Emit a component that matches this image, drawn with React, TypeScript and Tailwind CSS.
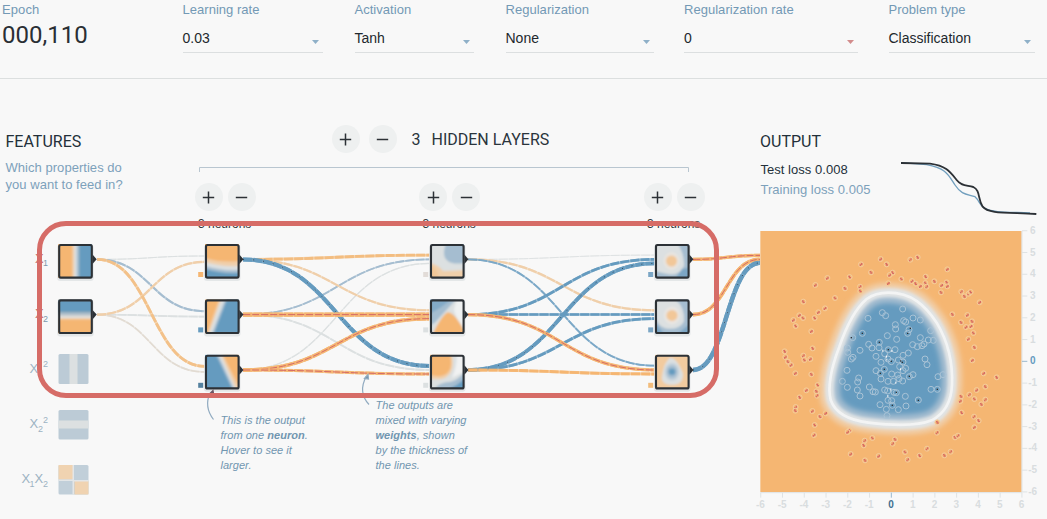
import React from "react";

const ORANGE = "#f5b672";
const PEACH = "#f0cfaa";
const BLUE = "#659bbf";
const SKY = "#a5bdd0";
const MIST = "#dce0e1";
const RED = "#d66c67";
const INK = "#2c3136";

function Field({ label, value, box, arrow = "#8fb0c8" }: { label: string; value: string; box: string; arrow?: string }) {
  return (
    <label className={`flex shrink-0 flex-col ${box}`}>
      <span className="h-[20px] whitespace-nowrap text-[13px] leading-[20px] tracking-[0.03px] text-[#7399b5]">{label}</span>
      <span className="flex h-[33px] items-center justify-between border-b border-[#dcdfe0] pr-[4px] pt-[4px]">
        <span className="text-[14px] leading-[20px] text-[#22282d]">{value}</span>
        <svg width="7" height="4" className="mt-[7px]">
          <path d="M0 0H7L3.5 4Z" fill={arrow} />
        </svg>
      </span>
    </label>
  );
}

function RoundButton({ kind }: { kind: "plus" | "minus" }) {
  return (
    <button className="flex size-[28px] items-center justify-center rounded-full bg-[#eef0f0]">
      <svg width="13" height="13" viewBox="0 0 13 13" stroke={INK} strokeWidth="1.5">
        <path d={kind === "plus" ? "M0.8 6.5H12.2M6.5 0.5V12.5" : "M0.8 6.5H12.2"} />
      </svg>
    </button>
  );
}

const rows = [259.4, 314.6, 370];
type Edge = { x1: number; y1: number; x2: number; y2: number; c: string; w: number; core?: string };
const link = (x1: number, a: number, x2: number, b: number, off: number, c: string, w: number, core?: string): Edge => ({
  x1, y1: rows[a], x2, y2: rows[b] + off, c, w, core,
});

const edges: Edge[] = [
  link(97, 0, 205, 0, -3.4, MIST, 1),
  link(97, 1, 205, 1, 2, MIST, 1.6),
  link(97, 1, 205, 2, 2, "#e2dbd2", 1.6),
  link(97, 0, 205, 1, -3.4, SKY, 2),
  link(97, 1, 205, 0, 2.5, PEACH, 2.2),
  link(97, 0, 205, 2, -3.6, "#f3c189", 2.8),
  link(243, 2, 430, 0, 4, MIST, 1.2),
  link(243, 1, 430, 2, 0, MIST, 1.8),
  link(243, 1, 430, 0, 0, SKY, 1.8),
  link(243, 0, 430, 1, -4.3, PEACH, 2.1),
  link(243, 0, 430, 0, -4.3, "#f3bd80", 2.8),
  link(243, 0, 430, 2, -4, BLUE, 4, "#334b5e"),
  link(243, 1, 430, 1, 0, ORANGE, 4.4, RED),
  link(243, 2, 430, 1, 4, ORANGE, 3.6, RED),
  link(243, 2, 430, 2, 4, ORANGE, 3, RED),
  link(468, 0, 655, 0, -4.3, MIST, 0.8),
  link(468, 0, 655, 1, -4.3, PEACH, 2.2),
  link(468, 0, 655, 2, -4.3, "#7ba8c7", 1.8),
  link(468, 1, 655, 0, 0, BLUE, 2.7),
  link(468, 1, 655, 1, 0, BLUE, 2.5),
  link(468, 2, 655, 0, 4, BLUE, 3.6, "#334b5e"),
  link(468, 2, 655, 1, 4, BLUE, 2.8),
  link(468, 2, 655, 2, 4, ORANGE, 2.8),
  link(468, 1, 655, 2, 0, ORANGE, 3.2, RED),
  link(693, 0, 760, 0, -4, ORANGE, 3.2, RED),
  link(693, 1, 760, 0, 0, ORANGE, 3.6, RED),
  link(693, 2, 760, 0, 3.5, BLUE, 4.4, "#334b5e"),
];

function EdgePath({ e }: { e: Edge }) {
  const m = (e.x1 + e.x2) / 2;
  const d = `M${e.x1} ${e.y1}C${m} ${e.y1} ${m} ${e.y2} ${e.x2} ${e.y2}`;
  return (
    <g fill="none">
      <path d={d} stroke={e.c} strokeWidth={e.w} opacity={e.w > 3 ? 0.85 : 0.65} />
      <path d={d} stroke={e.c} strokeWidth={e.w} strokeDasharray="9 1.2" />
      {e.core && <path d={d} stroke={e.core} strokeWidth={1} strokeDasharray={e.core === RED ? "7 2" : "1 9"} />}
    </g>
  );
}

const heat: Record<string, React.ReactNode> = {
  x1: <><rect width="34" height="34" fill={ORANGE} /><path d="M14 0h3v34h-3z" fill={PEACH} /><path d="M16 0h3v34h-3z" fill={MIST} /><path d="M18.500 0h3v34h-3z" fill={SKY} /><path d="M21 0h13v34H21z" fill={BLUE} /></>,
  x2: <><rect width="34" height="34" fill={ORANGE} /><path d="M0 0h34v13H0z" fill={BLUE} /><path d="M0 13h34v3H0z" fill={SKY} /><path d="M0 16h34v2.500H0z" fill={MIST} /><path d="M0 18.500h34v1.500H0z" fill={PEACH} /></>,
  a1: <><rect width="34" height="34" fill={ORANGE} /><path d="M0 14Q16 19 34 17V34H0Z" fill={PEACH} /><path d="M0 18Q16 23 34 22V34H0Z" fill={MIST} /><path d="M0 22Q16 27 34 26V34H0Z" fill={SKY} /><path d="M0 25Q16 30 34 29V34H0Z" fill={BLUE} /></>,
  a2: <><rect width="34" height="34" fill={ORANGE} /><path d="M14 0H34V34H2Z" fill={PEACH} /><path d="M16 0H34V34H4Z" fill={MIST} /><path d="M20 0H34V34H7Z" fill={SKY} /><path d="M22 0H34V34H9Z" fill={BLUE} /></>,
  a3: <><rect width="34" height="34" fill={BLUE} /><path d="M11 0H34V34H27Z" fill={SKY} /><path d="M13 0H34V34H29Z" fill={MIST} /><path d="M16 0H34V34H31Z" fill={PEACH} /><path d="M18 0H34V32Z" fill={ORANGE} /></>,
  b1: <><rect width="34" height="34" fill={MIST} /><path d="M16 0C11 12 15 22 34 19V0Z" fill={SKY} /><path d="M0 19Q9 21 13 27Q23 27 34 26V34H0Z" fill={PEACH} /><path d="M0 22Q7 23 9 34H0Z" fill="#f2c798" /></>,
  b2: <><rect width="34" height="34" fill={MIST} /><path d="M0 0H26L5 23L0 26Z" fill={SKY} /><path d="M0 0H21Q12 8 0 14Z" fill="#83aac7" /><path d="M27 0H34V28Q26 20 24 10Z" fill="#eff1f1" /><path d="M3 34Q14 12 19 13Q25 14 34 31V34Z" fill={ORANGE} /></>,
  b3: <><rect width="34" height="34" fill={MIST} /><path d="M0 0H22Q26 19 13 24Q8 25 0 24Z" fill={PEACH} /><path d="M0 0H20Q24 18 12 21Q7 22 0 20Z" fill={ORANGE} /><path d="M27 0H34V17L22 23Q27 12 27 0Z" fill="#f1f2f2" /><path d="M34 18V34H5Q8 28 21 27Q28 25 34 18Z" fill={SKY} /><path d="M34 24V34H18Q28 31 34 24Z" fill={BLUE} /></>,
  c1: <><rect width="34" height="34" fill={SKY} /><path d="M0 0H23Q30 12 29 22Q24 34 8 29L0 27Z" fill={MIST} /><path d="M27 25Q31 25 34 23V34H21Z" fill="#7ba6c5" /><ellipse cx="16.500" cy="17" rx="8" ry="9" fill="#e8e4df" /><circle cx="16.500" cy="17" r="5.500" fill="#f2c798" /></>,
  c2: <><rect width="34" height="34" fill={SKY} /><path d="M0 0H20Q30 7 29 22Q24 31 11 29Q4 28 0 18Z" fill={MIST} /><path d="M0 24L9 34H0ZM34 25V34H23Z" fill="#7ba6c5" /><ellipse cx="17" cy="16" rx="8" ry="9" fill="#e9e5e1" /><circle cx="17" cy="16" r="5.500" fill="#f2c798" /></>,
  c3: <><rect width="34" height="34" fill="#f2cb9f" /><path d="M15 3Q22 3 28 19Q28 30 18 30Q6 30 7 22Q9 7 15 3Z" fill={MIST} /><ellipse cx="17" cy="17" rx="7.500" ry="9" fill="#c6d2db" /><ellipse cx="17" cy="17" rx="5.500" ry="6.500" fill={SKY} /><circle cx="17" cy="17" r="3.300" fill={BLUE} /></>,
};

const nodes: { id: string; x: number; y: number; bias?: string }[] = [
  { id: "x1", x: 58.2, y: 244 }, { id: "x2", x: 58.2, y: 299.4 },
  { id: "a1", x: 205, y: 244, bias: ORANGE }, { id: "a2", x: 205, y: 299.4, bias: BLUE }, { id: "a3", x: 205, y: 354.8, bias: "#54819f" },
  { id: "b1", x: 430, y: 244, bias: "#e2dcd8" }, { id: "b2", x: 430, y: 299.4, bias: MIST }, { id: "b3", x: 430, y: 354.8, bias: MIST },
  { id: "c1", x: 655, y: 244, bias: "#7ba6c5" }, { id: "c2", x: 655, y: 299.4, bias: "#7ba6c5" }, { id: "c3", x: 655, y: 354.8, bias: "#f2bc7c" },
];

function Network() {
  return (
    <svg width="760" height="519" viewBox="0 0 760 519" className="pointer-events-none absolute left-0 top-0" fontFamily="'Liberation Sans', sans-serif">
      <defs>
        <filter id="blend" x="-10%" y="-10%" width="120%" height="120%"><feGaussianBlur stdDeviation="0.9" /></filter>
      </defs>
      <path d="M199.500 172V167.500H688.500V172" fill="none" stroke="#b9c6d0" />
      {edges.map((e, i) => <EdgePath key={i} e={e} />)}
      {nodes.map((n) => (
        <g key={n.id} transform={`translate(${n.x} ${n.y})`}>
          <rect x="-1" y="1" width="36.500" height="36" rx="3" fill="#e1e4e5" opacity="0.85" />
          <svg width="34" height="34">
            <g>{heat[n.id]}</g>
            <g filter="url(#blend)">{heat[n.id]}</g>
          </svg>
          <rect x="1" y="1" width="32.600" height="32.600" rx="1.500" fill="none" stroke={INK} strokeWidth="2.100" />
          <path d="M34.300 10.500L38.500 15.200L34.300 20Z" fill={INK} />
          {n.bias && <rect x="-6.800" y="28" width="5" height="5" fill={n.bias} />}
        </g>
      ))}
      <g>
        <rect x="58.500" y="354" width="30" height="30" rx="1.500" fill="#bccbd6" /><path d="M69.500 354h8v30h-8z" fill={MIST} />
        <rect x="58.500" y="410" width="30" height="29.500" rx="1.500" fill="#bccbd6" /><path d="M58.500 420.500h30v8h-30z" fill={MIST} />
        <rect x="58.500" y="465" width="30" height="29.500" rx="1.500" fill="#c1cfd9" /><path d="M58.500 465h14.500v14.500h-14.500zM74.500 481h14v13.500h-14z" fill="#f0d3b1" />
        <path d="M72.500 465h1.500v15h14.500v1.500H74v13h-1.500v-13.500h-14v-1.500h14z" fill="#e3e6e7" />
      </g>
      <g fill="#9db3c3" fontSize="13">
        <text x="35" y="262.500" fill="#c46f6d">X</text><text x="43" y="266" fontSize="9" fill="#8099ab">1</text>
        <text x="35" y="317.500" fill="#c46f6d">X</text><text x="43" y="321.500" fontSize="9" fill="#8099ab">2</text>
        <text x="29.500" y="373">X</text><text x="38" y="376" fontSize="9">1</text><text x="43" y="367" fontSize="9">2</text>
        <text x="29.500" y="428">X</text><text x="38" y="431.500" fontSize="9">2</text><text x="43" y="422.500" fontSize="9">2</text>
        <text x="21.500" y="483">X</text><text x="29.500" y="486.500" fontSize="9">1</text><text x="34.500" y="483">X</text><text x="43" y="486.500" fontSize="9">2</text>
      </g>
      <g fill="none" stroke="#91abc0" strokeWidth="1.200">
        <path d="M213.500 419.500C207 411 206 402 210 393" />
        <path d="M369 404.500C361 396 361 386 366.500 376" />
        <path d="M364.500 378.500L368 374.500L368.500 379Z" fill="#6f93ae" />
        <path d="M210.500 393L213 390.500L213.500 393.500Z" fill="#6d5563" stroke="#6d5563" />
      </g>
    </svg>
  );
}

const redPoints = "392,102 410,118 333,118 363,142 232,159 299,156 196,180 285,190 330,185 331,198 415,175 428,143 419,150 454,162 481,104 503,97 592,133 527,155 486,168 497,176 511,184 526,174 530,185 553,169 575,181 590,172 592,184 573,202 634,200 643,214 656,206 662,201 689,232 160,230 225,250 255,219 205,262 194,279 148,271 159,279 130,285 137,303 184,319 607,268 652,270 633,292 648,306 666,289 663,304 670,324 655,342 673,367 667,406 104,379 106,396 114,410 123,420 188,370 160,392 163,405 181,402 184,448 136,445 203,480 169,496 199,499 201,512 149,517 137,546 136,557 187,558 210,575 227,565 194,600 192,630 299,616 293,621 367,639 344,647 341,661 302,687 345,706 386,693 435,643 428,656 465,681 473,704 509,692 531,671 583,691 602,680 562,592 561,623 615,637 624,632 635,563 631,528 633,514 658,509 673,522 680,495 706,485 701,445 740,457 706,524 694,538 672,575 686,587 673,607";
const bluePoints = "458,252 397,263 407,272 354,280 461,287 467,291 489,279 511,285 542,317 308,338 337,325 436,299 437,312 412,332 477,314 473,325 440,343 511,338 535,345 550,346 522,357 356,358 366,369 388,352 387,368 415,374 435,374 488,359 502,365 516,362 292,369 293,382 330,376 304,402 309,397 378,394 404,386 414,402 393,412 459,391 475,384 525,402 531,419 291,436 378,437 403,433 424,410 445,405 449,425 459,411 459,437 467,430 489,449 478,455 443,450 425,447 391,445 393,462 277,469 326,459 323,471 292,487 358,486 369,500 376,501 322,495 330,513 404,495 413,498 414,469 430,469 447,461 458,468 432,502 439,503 466,514 505,525 543,493 562,493 564,455 579,449 390,539 414,526 425,527 427,541 409,553 445,554 468,543 411,572";
const sparks = "304,338 337,325 481,310 473,325 388,352 415,374 424,409 452,408 457,412 403,433 391,445 478,454 562,493 439,502 505,526 427,541";
const parse = (s: string) => s.split(" ").map((p) => p.split(",").map(Number));
const boundary = "M415 203C485 203 525 240 560 293C594 350 609 414 606 480C604 528 587 564 545 586C502 604 430 602 355 593C292 585 255 562 242 525C233 488 243 430 268 365C287 310 310 256 350 222C369 208 390 203 415 203Z";

function OutputMap() {
  const ticks = [6, 5, 4, 3, 2, 1, 0, -1, -2, -3, -4, -5, -6];
  return (
    <svg width="297" height="294" viewBox="0 0 891 882" className="-ml-[10px] -mt-[6px] block" fontFamily="'Liberation Sans', sans-serif">
      <defs>
        <clipPath id="inside"><path d={boundary} /></clipPath>
        <filter id="soft" x="-20%" y="-20%" width="140%" height="140%"><feGaussianBlur stdDeviation="4" /></filter>
        <filter id="haze" x="-20%" y="-20%" width="140%" height="140%"><feGaussianBlur stdDeviation="8" /></filter>
      </defs>
      <rect x="31" y="18" width="784" height="783" fill={ORANGE} />
      <path d={boundary} fill="none" stroke={PEACH} strokeWidth="60" filter="url(#haze)" />
      <g filter="url(#soft)">
        <path d={boundary} fill={BLUE} />
      </g>
      <g clipPath="url(#inside)">
        <path d={boundary} fill="none" stroke={SKY} strokeWidth="62" filter="url(#haze)" />
      </g>
      <path d={boundary} fill="none" stroke="#e1e4e5" strokeWidth="28" filter="url(#soft)" />
      <path d={boundary} fill="none" stroke="#fbfbfb" strokeWidth="8" opacity="0.7" />
      <g fill="none" stroke="#a9c3d6" strokeWidth="3">
        {parse(bluePoints).map(([x, y], i) => <circle key={i} cx={x} cy={y} r="9" />)}
      </g>
      {parse(sparks).map(([x, y], i) => <rect key={i} x={x - 2} y={y - 2} width="4" height="4" fill={INK} />)}
      {parse("397,374 409,401 424,375 436,470 412,510 408,392 450,430 421,490").map(([x, y], i) => <rect key={i} x={x} y={y} width="3" height="6" fill="#f5f7f8" />)}
      {parse(redPoints).map(([x, y], i) => (
        <g key={i}><circle cx={x} cy={y} r="7.500" fill={ORANGE} stroke="#f3cfa5" strokeWidth="2.500" /><path d={i % 2 ? `M${x - 4} ${y - 4}h5v4h3v4h-6v-4h-2z` : `M${x - 4} ${y}h4v-4h4v6h-4v3h-4z`} fill={RED} /></g>
      ))}
      <g stroke="#dfe3e4" strokeWidth="3">
        <path d="M816 18V801M31 803H816" />
        {ticks.map((t) => <path key={t} d={`M816 ${409 - t * 65.300}h16M${424 + t * 65.300} 803v15`} stroke={t === 0 ? "#9bb8cd" : "#dfe3e4"} />)}
      </g>
      <g fontSize="30" textAnchor="middle" fontWeight="700">
        {ticks.map((t) => (
          <g key={t} fill={t === 0 ? BLUE : "#d9dddf"}>
            <text x="848" y={418 - t * 65.300}>{t}</text>
            <text x={423 + t * 65.300} y="848" fill={t === 0 ? "#416f90" : "#d9dddf"}>{t}</text>
          </g>
        ))}
      </g>
    </svg>
  );
}

export default function App() {
  return (
    <div className="relative flex h-[519px] w-[1047px] flex-col overflow-hidden bg-[#f8f8f8] font-['Liberation_Sans',sans-serif]">
      <header className="flex h-[79px] shrink-0 items-start border-b border-[#dcdfdf] pl-[2px]">
        <div className="flex w-[180.500px] shrink-0 flex-col">
          <span className="text-[13px] leading-[20px] tracking-[0.1px] text-[#7399b5]">Epoch</span>
          <span className="font-[Roboto,sans-serif] text-[24px] leading-[30px] text-[#2a2f34]">000,110</span>
        </div>
        <Field label="Learning rate" value="0.03" box="w-[140.500px] mr-[31.500px]" />
        <Field label="Activation" value="Tanh" box="w-[119.500px] mr-[31.500px]" />
        <Field label="Regularization" value="None" box="w-[148.500px] mr-[30px]" />
        <Field label="Regularization rate" value="0" box="w-[174px] mr-[30.500px]" arrow="#d28c8c" />
        <Field label="Problem type" value="Classification" box="w-[146.500px]" />
      </header>

      <main className="flex flex-1">
        <section className="w-[194.500px] shrink-0 pl-[5.500px] pt-[53px]">
          <h2 className="font-[Roboto,sans-serif] text-[16px] leading-[20px] text-[#23303a]">FEATURES</h2>
          <p className="mt-[7px] text-[13px] leading-[17px] tracking-[0.04px] text-[#7da1bb]">Which properties do<br />you want to feed in?</p>
        </section>

        <section className="w-[565.500px] shrink-0 pt-[46px]">
          <div className="flex h-[28px] items-center gap-[9px] pl-[137px]">
            <RoundButton kind="plus" />
            <RoundButton kind="minus" />
            <h2 className="ml-[6px] mt-[2px] flex gap-[11px] whitespace-nowrap font-[Roboto,sans-serif] text-[16px] leading-[20px] text-[#2a343c]">
              <span>3</span><span>HIDDEN LAYERS</span>
            </h2>
          </div>
          <div className="mt-[30px] flex gap-[163.500px]">
            {[0, 1, 2].map((i) => (
              <div key={i} className="flex w-[61px] shrink-0 flex-col">
                <div className="flex justify-between">
                  <RoundButton kind="plus" />
                  <RoundButton kind="minus" />
                </div>
                <span className="mt-[5px] whitespace-nowrap pl-[3.500px] text-[12px] leading-[16px] text-[#33383c]">3 neurons</span>
              </div>
            ))}
          </div>
        </section>

        <section className="flex flex-1 flex-col pt-[53px]">
          <div className="flex h-[99px] shrink-0">
            <div className="w-[140px] shrink-0">
              <h2 className="font-[Roboto,sans-serif] text-[16px] leading-[20px] text-[#23303a]">OUTPUT</h2>
              <p className="mt-[8px] whitespace-nowrap pl-[0.500px] text-[13px] leading-[20px] tracking-[0.03px] text-[#23303a]">Test loss 0.008</p>
              <p className="whitespace-nowrap pl-[0.500px] text-[13px] leading-[20px] tracking-[0.03px] text-[#7da1bb]">Training loss 0.005</p>
            </div>
            <svg width="147" height="99" viewBox="480 36 441 297" fill="none" strokeLinejoin="round">
              <path d="M483 128L560 134C620 145 625 165 645 195C665 225 680 222 705 230C722 245 715 255 735 265C760 278 800 276 870 279" stroke="#719fbe" strokeWidth="4" />
              <path d="M483 129L570 131C620 138 630 155 650 180C665 199 680 195 700 201C722 212 712 235 728 260C745 282 800 277 889 282" stroke={INK} strokeWidth="5.500" />
            </svg>
          </div>
          <OutputMap />
        </section>
      </main>

      <Network />
      <p className="absolute left-[220.500px] top-[413px] whitespace-nowrap text-[11px] italic leading-[15px] tracking-[0.03px] text-[#7196b0]">
        This is the output<br />from one <b>neuron</b>.<br />Hover to see it<br />larger.
      </p>
      <p className="absolute left-[375.500px] top-[398px] whitespace-nowrap text-[11px] italic leading-[15px] tracking-[0.03px] text-[#7196b0]">
        The outputs are<br />mixed with varying<br /><b>weights</b>, shown<br />by the thickness of<br />the lines.
      </p>
      <div className="pointer-events-none absolute left-[37px] top-[221px] h-[177px] w-[682px] rounded-[29px] border-[5px] border-[#d66c67]" />
    </div>
  );
}
